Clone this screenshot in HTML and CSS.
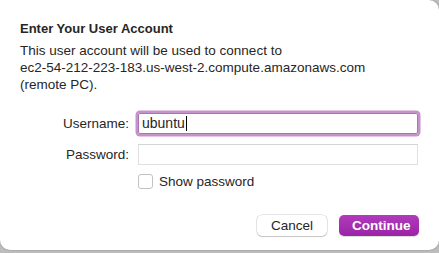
FILE: index.html
```html
<!DOCTYPE html>
<html lang="en">
<head>
    <meta charset="UTF-8">
    <title>Enter Your User Account</title>
    <link rel="stylesheet" href="styles.css">
</head>
<body>
    <div class="dialog">
        <h1 class="title">Enter Your User Account</h1>
        <p class="message">This user account will be used to connect to<br>ec2-54-212-223-183.us-west-2.compute.amazonaws.com<br>(remote PC).</p>
        <div class="form">
            <div class="row">
                <label class="label">Username:</label>
                <div class="field focused">ubuntu<span class="caret"></span></div>
            </div>
            <div class="row">
                <label class="label">Password:</label>
                <div class="field"></div>
            </div>
            <div class="row">
                <span class="label"></span>
                <div class="check">
                    <span class="box"></span>
                    <span>Show password</span>
                </div>
            </div>
        </div>
        <div class="actions">
            <button class="btn">Cancel</button>
            <button class="btn primary">Continue</button>
        </div>
    </div>
</body>
</html>
```
FILE: styles.css
```css
:root {
    --text-color: #262626;
    --accent: #a22fae;
    --ring: #c592cb;
}

body {
    margin: 0;
    width: 439px;
    height: 253px;
    background-color: #bdbdbd;
    font-family: 'Liberation Sans', Arial, sans-serif;
    font-size: 13.5px;
    color: var(--text-color);
    overflow: hidden;
}

.dialog {
    background-color: white;
    height: 250px;
    box-sizing: border-box;
    border-radius: 0 10px 10px 10px;
    padding: 21px 20px 0 20px;
    box-shadow: 0 0 2px rgba(0, 0, 0, 0.3);
}

.title {
    font-size: 13px;
    font-weight: bold;
    line-height: 16px;
    margin: 0;
}

.message {
    margin: 5px 0 0 0;
    line-height: 17px;
}

.form {
    margin-top: 20px;
    display: flex;
    flex-direction: column;
    gap: 10px;
}

.row {
    display: flex;
    align-items: center;
    gap: 9px;
}

.row + .row + .row {
    margin-top: -1px;
}

.label {
    width: 109px;
    text-align: right;
}

.field {
    width: 280px;
    height: 21px;
    box-sizing: border-box;
    border: 1px solid #e0e0e0;
    border-top-color: #d4d4d4;
    padding: 0 3px;
    line-height: 19px;
    font-size: 13.5px;
    display: flex;
    align-items: center;
}

.field.focused {
    border-color: #a875b2;
    border-radius: 2px;
    box-shadow: 0 0 0 2.5px var(--ring);
    font-size: 14px;
}

.caret {
    display: inline-block;
    width: 1px;
    height: 15px;
    background-color: black;
    margin-left: 1px;
}

.check {
    display: flex;
    align-items: center;
    gap: 6px;
}

.box {
    width: 13px;
    height: 13px;
    border: 1px solid #c2c2c2;
    border-radius: 3px;
    background-color: white;
}

.actions {
    margin-top: 26px;
    display: flex;
    justify-content: flex-end;
    gap: 12px;
}

.btn {
    font-family: inherit;
    font-size: 13.5px;
    height: 21px;
    padding: 0 13px;
    border-radius: 5px;
    border: none;
    background-color: white;
    color: var(--text-color);
    box-shadow: 0 0 0 0.5px rgba(0, 0, 0, 0.2), 0 1px 1px rgba(0, 0, 0, 0.15);
    width: 70px;
}

.btn.primary {
    width: 80px;
    color: white;
    font-weight: bold;
    background: linear-gradient(#b13bbd, #9a24a5);
    box-shadow: 0 1px 1px rgba(0, 0, 0, 0.15);
}
```
